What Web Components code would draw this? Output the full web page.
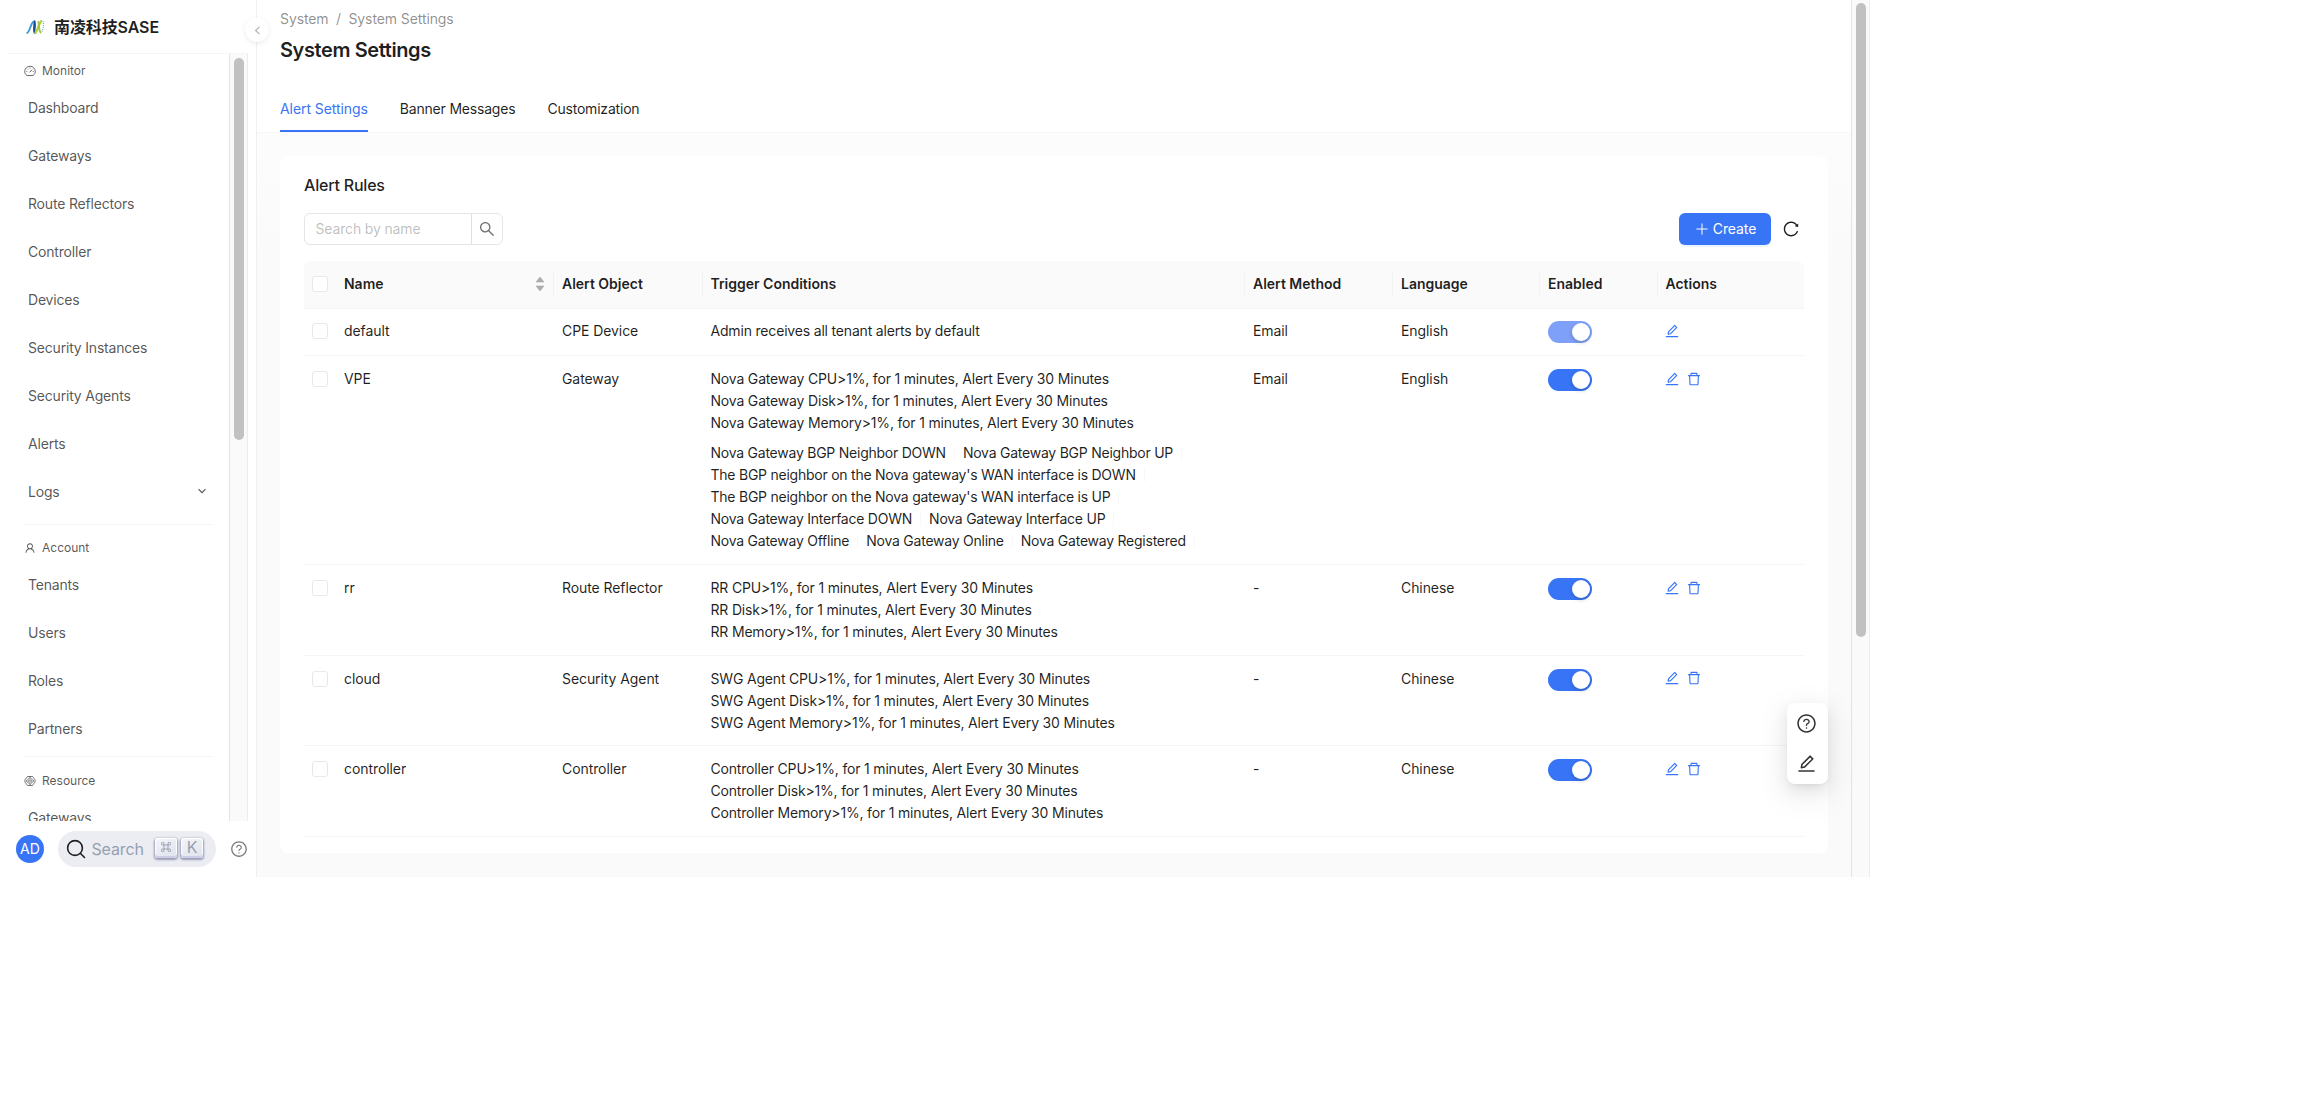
<!DOCTYPE html>
<html lang="en">
<head>
<meta charset="utf-8">
<title>System Settings</title>
<style>
html,body{margin:0;padding:0;background:#fff}
body{font-family:Inter,"Noto Sans CJK SC",sans-serif;font-size:14px;line-height:22px;color:rgba(0,0,0,.88);width:2314px;height:1096px;overflow:hidden}
</style>
</head>
<body>
<sase-app></sase-app>
<script>
const def=(name,html,init)=>customElements.define(name,class extends HTMLElement{
  connectedCallback(){
    if(this.shadowRoot)return;
    const r=this.attachShadow({mode:'open'});
    r.innerHTML=typeof html==='function'?html(this):html;
    if(init)init(this,r);
  }
});

const ICONS={
edit:'<path d="M257.7 752c2 0 4-.2 6-.5L431.9 722c2-.4 3.9-1.3 5.3-2.8l423.9-423.9a9.96 9.96 0 000-14.1L694.9 114.9c-1.9-1.9-4.4-2.9-7.1-2.9s-5.2 1-7.1 2.9L256.8 538.8c-1.5 1.5-2.4 3.3-2.8 5.3l-29.5 168.2a33.5 33.5 0 009.4 29.8c6.6 6.4 14.9 9.9 23.8 9.9zm67.4-174.4L687.8 215l73.3 73.3-362.7 362.6-88.9 15.7 15.6-89zM880 836H144c-17.7 0-32 14.3-32 32v36c0 4.4 3.6 8 8 8h784c4.4 0 8-3.6 8-8v-36c0-17.7-14.3-32-32-32z"/>',
trash:'<path d="M360 184h-8c4.4 0 8-3.6 8-8v8h304v-8c0 4.4 3.6 8 8 8h-8v72h72v-80c0-35.3-28.7-64-64-64H352c-35.3 0-64 28.7-64 64v80h72v-72zm504 72H160c-17.7 0-32 14.3-32 32v32c0 4.4 3.6 8 8 8h60.4l24.7 523c1.6 34.1 29.8 61 63.9 61h454c34.2 0 62.3-26.8 63.9-61l24.7-523H888c4.4 0 8-3.6 8-8v-32c0-17.7-14.3-32-32-32zM731.3 840H292.7l-24.2-512h487l-24.2 512z"/>',
help:'<path d="M512 64C264.6 64 64 264.6 64 512s200.6 448 448 448 448-200.6 448-448S759.4 64 512 64zm0 820c-205.4 0-372-166.6-372-372s166.6-372 372-372 372 166.6 372 372-166.6 372-372 372z"/><path d="M623.6 316.7C593.6 290.4 554 276 512 276s-81.6 14.5-111.6 40.7C369.2 344 352 380.7 352 420v7.6c0 4.4 3.6 8 8 8h48c4.4 0 8-3.6 8-8V420c0-44.1 43.1-80 96-80s96 35.9 96 80c0 31.1-22 59.6-56.1 72.7-21.2 8.1-39.2 22.3-52.1 40.9-13.1 19-19.9 41.8-19.9 64.9V620c0 4.4 3.6 8 8 8h48c4.4 0 8-3.6 8-8v-22.7a48.3 48.3 0 0130.9-44.8c59-22.7 97.1-74.7 97.1-132.5.1-39.3-17.1-76-48.3-103.3zM472 732a40 40 0 1080 0 40 40 0 10-80 0z"/>',
search:'<path d="M909.6 854.5L649.9 594.8C690.2 542.7 712 479 712 412c0-80.2-31.3-155.4-87.9-212.1-56.6-56.7-132-87.9-212.1-87.9s-155.5 31.3-212.1 87.9C143.2 256.5 112 331.8 112 412c0 80.1 31.3 155.5 87.9 212.1C256.5 680.8 331.8 712 412 712c67 0 130.6-21.8 182.7-62l259.7 259.6a8.2 8.2 0 0011.6 0l43.6-43.5a8.2 8.2 0 000-11.6zM570.4 570.4C528 612.7 471.8 636 412 636s-116-23.3-158.4-65.6C211.3 528 188 471.8 188 412s23.3-116.1 65.6-158.4C296 211.3 352.2 188 412 188s116.1 23.2 158.4 65.6S636 352.2 636 412s-23.3 116.1-65.6 158.4z"/>',
reload:'<path d="M909.1 209.3l-56.4 44.1C775.8 155.1 656.2 92 521.9 92 290 92 102.3 279.5 102 511.5 101.7 743.7 289.8 932 521.9 932c181.3 0 335.8-115 394.6-276.1 1.5-4.2-.7-8.9-4.9-10.3l-56.7-19.5a8 8 0 00-10.1 4.8c-1.8 5-3.8 10-5.9 14.9-17.3 41-42.1 77.8-73.7 109.4A344.77 344.77 0 01655.9 829c-42.3 17.9-87.4 27-133.8 27-46.5 0-91.5-9.1-133.8-27A341.5 341.5 0 01279 755.2a342.16 342.16 0 01-73.7-109.4c-17.9-42.4-27-87.4-27-133.9s9.1-91.5 27-133.9c17.3-41 42.1-77.8 73.7-109.4 31.6-31.6 68.4-56.4 109.3-73.8 42.3-17.9 87.4-27 133.8-27 46.5 0 91.5 9.1 133.8 27a341.5 341.5 0 01109.3 73.8c9.9 9.9 19.2 20.4 27.8 31.4l-60.2 47a8 8 0 003 14.1l175.6 43c5 1.2 9.9-2.6 9.9-7.7l.8-180.9c-.1-6.6-7.8-10.3-13-6.2z"/>',
plus:'<path d="M480 152h64v720h-64z"/><path d="M152 480h720v64H152z"/>',
user:'<path d="M858.5 763.6a374 374 0 00-80.6-119.5 375.63 375.63 0 00-119.5-80.6c-.4-.2-.8-.3-1.2-.5C719.5 518 760 444.7 760 362c0-137-111-248-248-248S264 225 264 362c0 82.7 40.5 156 102.8 201.1-.4.2-.8.3-1.2.5-44.8 18.9-85 46-119.5 80.6a375.63 375.63 0 00-80.6 119.5A371.7 371.7 0 00136 901.8a8 8 0 008 8.2h60c4.4 0 7.9-3.5 8-7.8 2-77.2 33-149.5 87.8-204.3 56.7-56.7 132-87.9 212.2-87.9s155.5 31.2 212.2 87.9C779 752.7 810 825 812 902.2c.1 4.4 3.6 7.8 8 7.8h60a8 8 0 008-8.2c-1-47.8-10.9-94.3-29.5-138.2zM512 534c-45.9 0-89.1-17.9-121.6-50.4S340 407.9 340 362c0-45.9 17.9-89.1 50.4-121.6S466.1 190 512 190s89.1 17.9 121.6 50.4S684 316.1 684 362c0 45.9-17.9 89.1-50.4 121.6S557.9 534 512 534z"/>',
gauge:'<g fill="none" stroke="currentColor" stroke-width="72" stroke-linecap="round"><path d="M230 880C120 800 60 690 60 560a452 452 0 01904 0c0 130-60 240-170 320z" stroke-linejoin="round"/><path d="M500 600l170-180" stroke-width="80"/><path d="M512 240v36M215 560h36M773 560h36M310 345l24 24" stroke-width="60"/></g>',
gem:'<g fill="none" stroke="currentColor" stroke-width="66" stroke-linejoin="round"><path d="M300 130h424l220 290v180L724 894H300L80 604V420z"/><path d="M512 230l330 282-330 282-330-282zM512 400l150 112-150 112-150-112zM512 130v100M512 794v100"/></g>',
down:'<path d="M160 330l352 360 352-360" fill="none" stroke="currentColor" stroke-width="112"/>',
left:'<path d="M700 170L330 512l370 342" fill="none" stroke="currentColor" stroke-width="100"/>'
};
def('ui-icon',el=>`<style>:host{display:inline-flex;flex:none}svg{display:block;fill:currentColor}</style>
<svg viewBox="0 0 1024 1024" width="${el.getAttribute('size')||16}" height="${el.getAttribute('size')||16}">${ICONS[el.getAttribute('name')]}</svg>`);

def('brand-logo',`<style>:host{display:flex;align-items:center;gap:10px;font-size:16px;font-weight:600;line-height:24px}
span{letter-spacing:-.1px}</style>
<svg width="18" height="14" viewBox="0 0 18 14"><path d="M.5 13.300C4.200 12.800 4.600 1.300 8.400 1.200" fill="none" stroke="#3fa0cf" stroke-width="2"/><path d="M8 1.300c2 .9-1.200 10.600 1.200 11.500" fill="none" stroke="#1f4a98" stroke-width="2.600"/><path d="M8.600 13.200C12 12.400 12.200 1.600 16 1" fill="none" stroke="#b4d335" stroke-width="2.500"/><path d="M11.600 1.200c2.200 1 .6 10.600 3.600 11.600" fill="none" stroke="#9cc545" stroke-width="1.800"/><path d="M17 1.200c.9 2.600.4 7.200-1 10.600" fill="none" stroke="#4f9fd0" stroke-width="1" stroke-dasharray="1 1"/></svg>
<span><slot></slot></span>`);

def('nav-item',el=>`<style>:host{display:flex;align-items:center;justify-content:space-between;height:48px;padding:0 14px 0 28px;color:rgba(0,0,0,.68);letter-spacing:-.19px}span{margin-top:-1px}ui-icon{margin-top:-2px;margin-right:8px}</style>
<span><slot></slot></span>${el.hasAttribute('expandable')?'<ui-icon name="down" size="10"></ui-icon>':''}`);

def('nav-group',el=>`<style>:host{display:block}
.label{display:flex;align-items:center;gap:6px;height:24px;padding-left:24px;font-size:12px;color:rgba(0,0,0,.68)}
.rule{height:1px;background:#f5f5f5;margin:3px 15px 12px 24px}
:host([wide]) .rule{margin-top:8px;margin-bottom:11px}
:host([first]) .rule{display:none}
.items{margin-top:1px}</style>
<div class="rule"></div><div class="label"><ui-icon name="${el.getAttribute('icon')}" size="12"></ui-icon><span>${el.getAttribute('label')}</span></div>
<div class="items"><slot></slot></div>`);

def('scroll-rail',`<style>:host{display:flow-root;box-sizing:border-box;background:#fafafa;border-left:1px solid #e4e4e4;border-right:1px solid #ececec;width:19px}
div{width:10px;border-radius:5px;background:#c1c1c1;margin-left:4px;margin-top:var(--top,4px);height:var(--thumb)}</style><div></div>`);

def('side-bar',`<style>:host{display:flex;flex-direction:column;width:256px;height:877px;border-right:1px solid #f0f0f0;background:#fff;flex:none}
header{height:53px;margin:0 8px 0 8px;border-bottom:1px solid #f5f5f5;padding-left:18px;display:flex;align-items:center}
.scroll{display:flex;height:767px;overflow:hidden;margin-right:8px}
nav{flex:1;padding-top:5px}
scroll-rail{height:767px;--thumb:382px}
footer{display:flex;align-items:center;height:56px;padding-left:16px;box-sizing:border-box}
.avatar{width:28px;height:28px;border-radius:50%;background:#3874f6;color:#fff;display:flex;align-items:center;justify-content:center}
.search{display:flex;align-items:center;box-sizing:border-box;width:158px;height:36px;border-radius:18px;background:#ebedf3;margin:0 13.500px 0 14px;padding-left:8px;color:#969faf;font-size:16px}
.search>span{margin-left:5.500px;width:63px;letter-spacing:-.15px}
kbd{font:inherit;box-sizing:border-box;width:22px;height:20px;border-radius:3px;background:linear-gradient(-26.500deg,#dfe2ec,#f4f5f9);box-shadow:inset 0 -2px 0 0 #cdcde6,inset 0 0 1px 1px #fff,0 1px 2px 1px rgba(30,35,90,.4);display:flex;align-items:center;justify-content:center;margin-right:4.500px;color:#969faf;line-height:16px;padding-bottom:3px;margin-top:-2px}
.help{color:rgba(0,0,0,.52)}</style>
<header><brand-logo>南凌科技SASE</brand-logo></header>
<div class="scroll"><nav>
<nav-group first icon="gauge" label="Monitor"><nav-item>Dashboard</nav-item><nav-item>Gateways</nav-item><nav-item>Route Reflectors</nav-item><nav-item>Controller</nav-item><nav-item>Devices</nav-item><nav-item>Security Instances</nav-item><nav-item>Security Agents</nav-item><nav-item>Alerts</nav-item><nav-item expandable>Logs</nav-item></nav-group>
<nav-group wide icon="user" label="Account"><nav-item>Tenants</nav-item><nav-item>Users</nav-item><nav-item>Roles</nav-item><nav-item>Partners</nav-item></nav-group>
<nav-group icon="gem" label="Resource"><nav-item>Gateways</nav-item></nav-group>
</nav><scroll-rail></scroll-rail></div>
<footer><div class="avatar"><span>AD</span></div>
<div class="search"><svg width="20" height="20" viewBox="0 0 20 20" fill="none" stroke="#1c1e21" stroke-width="1.600" stroke-linecap="round"><circle cx="9" cy="9" r="7.400"/><path d="M14.500 14.500l4 4"/></svg><span>Search</span>
<kbd><svg width="10" height="10" viewBox="0 0 15 15" fill="none" stroke="#969faf" stroke-width="1.400"><path d="M4.500 4.500v6M10.500 4.500v6M4.500 4.500h6M4.500 10.500h6M4.500 4.500H3A2 2 0 1 1 4.500 3zM10.500 4.500V3A2 2 0 1 1 12 4.500zM4.500 10.500V12A2 2 0 1 1 3 10.500zM10.500 10.500H12A2 2 0 1 1 10.500 12z"/></svg></kbd><kbd>K</kbd></div>
<ui-icon class="help" name="help" size="18"></ui-icon></footer>`);

def('page-header',`<style>:host{display:block;height:132px;background:#fff;border-bottom:1px solid #f7f7f7;padding-left:23px}
.crumb{display:flex;gap:7.500px;color:rgba(0,0,0,.45);padding-top:8px;letter-spacing:-.1px}
h1{margin:5px 0 0;font-size:20px;line-height:28px;font-weight:600;padding-top:1px;letter-spacing:-.4px}
.tabs{display:flex;gap:32px;margin-top:34px}
.tabs span{display:block;height:32px;letter-spacing:-.2px}
.tabs .on{color:#3874f6;border-bottom:2px solid #3874f6;letter-spacing:-.07px}</style>
<div class="crumb"><span>System</span><span>/</span><span>System Settings</span></div>
<h1>System Settings</h1>
<div class="tabs"><span class="on">Alert Settings</span><span>Banner Messages</span><span>Customization</span></div>`);

def('check-box',`<style>:host{display:block;box-sizing:border-box;width:16px;height:16px;border:1px solid #e8e8e8;border-radius:3px;background:#fff}</style>`);

def('toggle-switch',`<style>:host{display:flex;justify-content:flex-end;box-sizing:border-box;width:44px;height:22px;border-radius:11px;background:#3874f6;padding:2px}
:host([disabled]){background:#7fa0f8}
i{width:18px;height:18px;border-radius:50%;background:#fff;box-shadow:0 2px 4px rgba(0,35,11,.2)}</style><i></i>`);

const COLS='32px 218px 148.500px 542.500px 148px 147px 117.500px 146.500px';
def('table-head',`<style>:host{display:grid;grid-template-columns:${COLS};height:47px;background:#fafafa;border-radius:8px 8px 0 0;border-bottom:1px solid #f5f5f5;font-weight:600;align-items:center}
span{padding-left:8px;display:flex;justify-content:space-between;align-items:center;height:24px;border-right:1px solid #f3f3f3;box-sizing:border-box;margin-top:-1px;letter-spacing:-.01px}
span:last-child,.none{border:0}svg{margin-right:8px}</style>
<span class="none"><check-box></check-box></span>
<span>Name<svg width="10" height="16" viewBox="0 0 10 16" fill="#acacac"><path d="M5 1l4 5H1zM5 15L1 10h8z" stroke="#acacac" stroke-width=".6" stroke-linejoin="round"/></svg></span>
<span>Alert Object</span><span>Trigger Conditions</span><span>Alert Method</span><span>Language</span><span>Enabled</span><span>Actions</span>`);

def('alert-row',el=>{
  const a=n=>el.getAttribute(n);
  const metrics=(a('metrics')||'').split('|').filter(Boolean).map(m=>`<div>${m}</div>`).join('');
  const events=(a('events')||'').split('|').filter(Boolean).map(l=>`<div class="ev">${l.split(';').map(e=>`<span>${e}</span>`).join('')}</div>`).join('');
  return `<style>:host{display:grid;grid-template-columns:${COLS};box-sizing:border-box;border-bottom:1px solid #f5f5f5;padding-top:12px;align-items:start}
:host([locked]){padding-top:11px}
.c{padding-left:8px;letter-spacing:-.08px}.tr{letter-spacing:-.18px}.ck{padding:3px 0 0 8px}.sw{padding:1px 0 0 7.500px}
.events{margin-top:8px;letter-spacing:-.24px}.ev{display:flex}.ev span{padding-right:8px;margin-right:8px;border-right:1px solid #f8f8f8;line-height:14px;margin-top:4px;margin-bottom:4px}
.act{display:flex;gap:6px;padding:2.500px 0 0 6.500px;color:#3874f6}</style>
<div class="ck"><check-box></check-box></div><div class="c">${a('name')}</div><div class="c">${a('object')}</div>
<div class="c tr"><div>${metrics}</div>${events?`<div class="events">${events}</div>`:''}</div>
<div class="c">${a('method')}</div><div class="c">${a('language')}</div>
<div class="sw"><toggle-switch ${el.hasAttribute('locked')?'disabled':''}></toggle-switch></div>
<div class="act"><ui-icon name="edit"></ui-icon>${el.hasAttribute('locked')?'':'<ui-icon name="trash"></ui-icon>'}</div>`});

def('search-field',`<style>:host{display:flex;box-sizing:border-box;width:199px;height:32px;border:1px solid #e5e5e5;border-radius:6px;align-items:stretch;overflow:hidden}
.t{flex:1;padding:4px 0 0 10.500px;color:rgba(0,0,0,.27);letter-spacing:-.15px}.b{width:30px;border-left:1px solid #e0e0e0;display:flex;align-items:center;justify-content:center;color:rgba(0,0,0,.55)}</style>
<div class="t"><slot></slot></div><div class="b"><ui-icon name="search" size="18"></ui-icon></div>`);

def('primary-button',`<style>:host{display:flex;align-items:center;justify-content:center;gap:3px;box-sizing:border-box;width:92px;height:32px;border-radius:6px;background:#3874f6;color:#fff;box-shadow:0 2px 0 rgba(5,130,255,.08)}span{letter-spacing:-.1px}</style><ui-icon name="plus" size="16"></ui-icon><span><slot></slot></span>`);

const rule=s=>`metrics="${['CPU','Disk','Memory'].map(k=>`${s} ${k}&gt;1%, for 1 minutes, Alert Every 30 Minutes`).join('|')}"`;
def('alert-card',`<style>:host{display:block;box-sizing:border-box;width:1548px;height:697px;margin:23px 0 0 23px;background:#fff;border-radius:8px;padding:17px 24px 0}
h2{margin:0;font-size:16px;line-height:24px;font-weight:500;letter-spacing:-.2px}
.bar{display:flex;align-items:center;margin-top:16px;height:32px}
primary-button{margin-left:auto}.bar>ui-icon{margin:0 4px 0 11px}
table-head{margin-top:16px}</style>
<h2>Alert Rules</h2>
<div class="bar"><search-field>Search by name</search-field><primary-button>Create</primary-button><ui-icon name="reload" size="18"></ui-icon></div>
<table-head></table-head>
<alert-row style="height:47px" locked name="default" object="CPE Device" metrics="Admin receives all tenant alerts by default" method="Email" language="English"></alert-row>
<alert-row style="height:209px" name="VPE" object="Gateway" ${rule('Nova Gateway')} events="Nova Gateway BGP Neighbor DOWN;Nova Gateway BGP Neighbor UP|The BGP neighbor on the Nova gateway's WAN interface is DOWN|The BGP neighbor on the Nova gateway's WAN interface is UP|Nova Gateway Interface DOWN;Nova Gateway Interface UP|Nova Gateway Offline;Nova Gateway Online;Nova Gateway Registered" method="Email" language="English"></alert-row>
<alert-row style="height:90.500px" name="rr" object="Route Reflector" ${rule('RR')} method="-" language="Chinese"></alert-row>
<alert-row style="height:90.500px" name="cloud" object="Security Agent" ${rule('SWG Agent')} method="-" language="Chinese"></alert-row>
<alert-row style="height:90.500px" name="controller" object="Controller" ${rule('Controller')} method="-" language="Chinese"></alert-row>`);

def('collapse-button',`<style>:host{position:absolute;left:245px;top:18px;width:24px;height:24px;border-radius:50%;background:#fff;box-shadow:0 2px 8px -2px rgba(0,0,0,.08),0 1px 4px -1px rgba(25,15,15,.08);display:flex;align-items:center;justify-content:center;color:rgba(0,0,0,.32)}</style><ui-icon name="left" size="11"></ui-icon>`);

def('float-tools',`<style>:host{position:absolute;left:1787px;top:703px;box-sizing:border-box;width:41px;height:81px;padding:0 1.500px 1px 0;border-radius:8px;background:#fff;box-shadow:0 6px 16px rgba(0,0,0,.08),0 3px 6px -4px rgba(0,0,0,.12),0 9px 28px 8px rgba(0,0,0,.05);display:flex;flex-direction:column;align-items:center;justify-content:space-around;color:rgba(0,0,0,.8)}</style><ui-icon name="help" size="21"></ui-icon><ui-icon name="edit" size="21"></ui-icon>`);

def('sase-app',`<style>:host{display:flex;position:relative;width:1870px;height:877px}
main{width:1595px;height:877px;background:linear-gradient(#fcfcfc 0,#fcfcfc 156px,#fafafa 260px);display:flow-root}
.rail{height:877px;--thumb:634px;--top:3px}</style>
<side-bar></side-bar><main><page-header></page-header><alert-card></alert-card></main><scroll-rail class="rail"></scroll-rail>
<collapse-button></collapse-button><float-tools></float-tools>`);
</script>
</body>
</html>
